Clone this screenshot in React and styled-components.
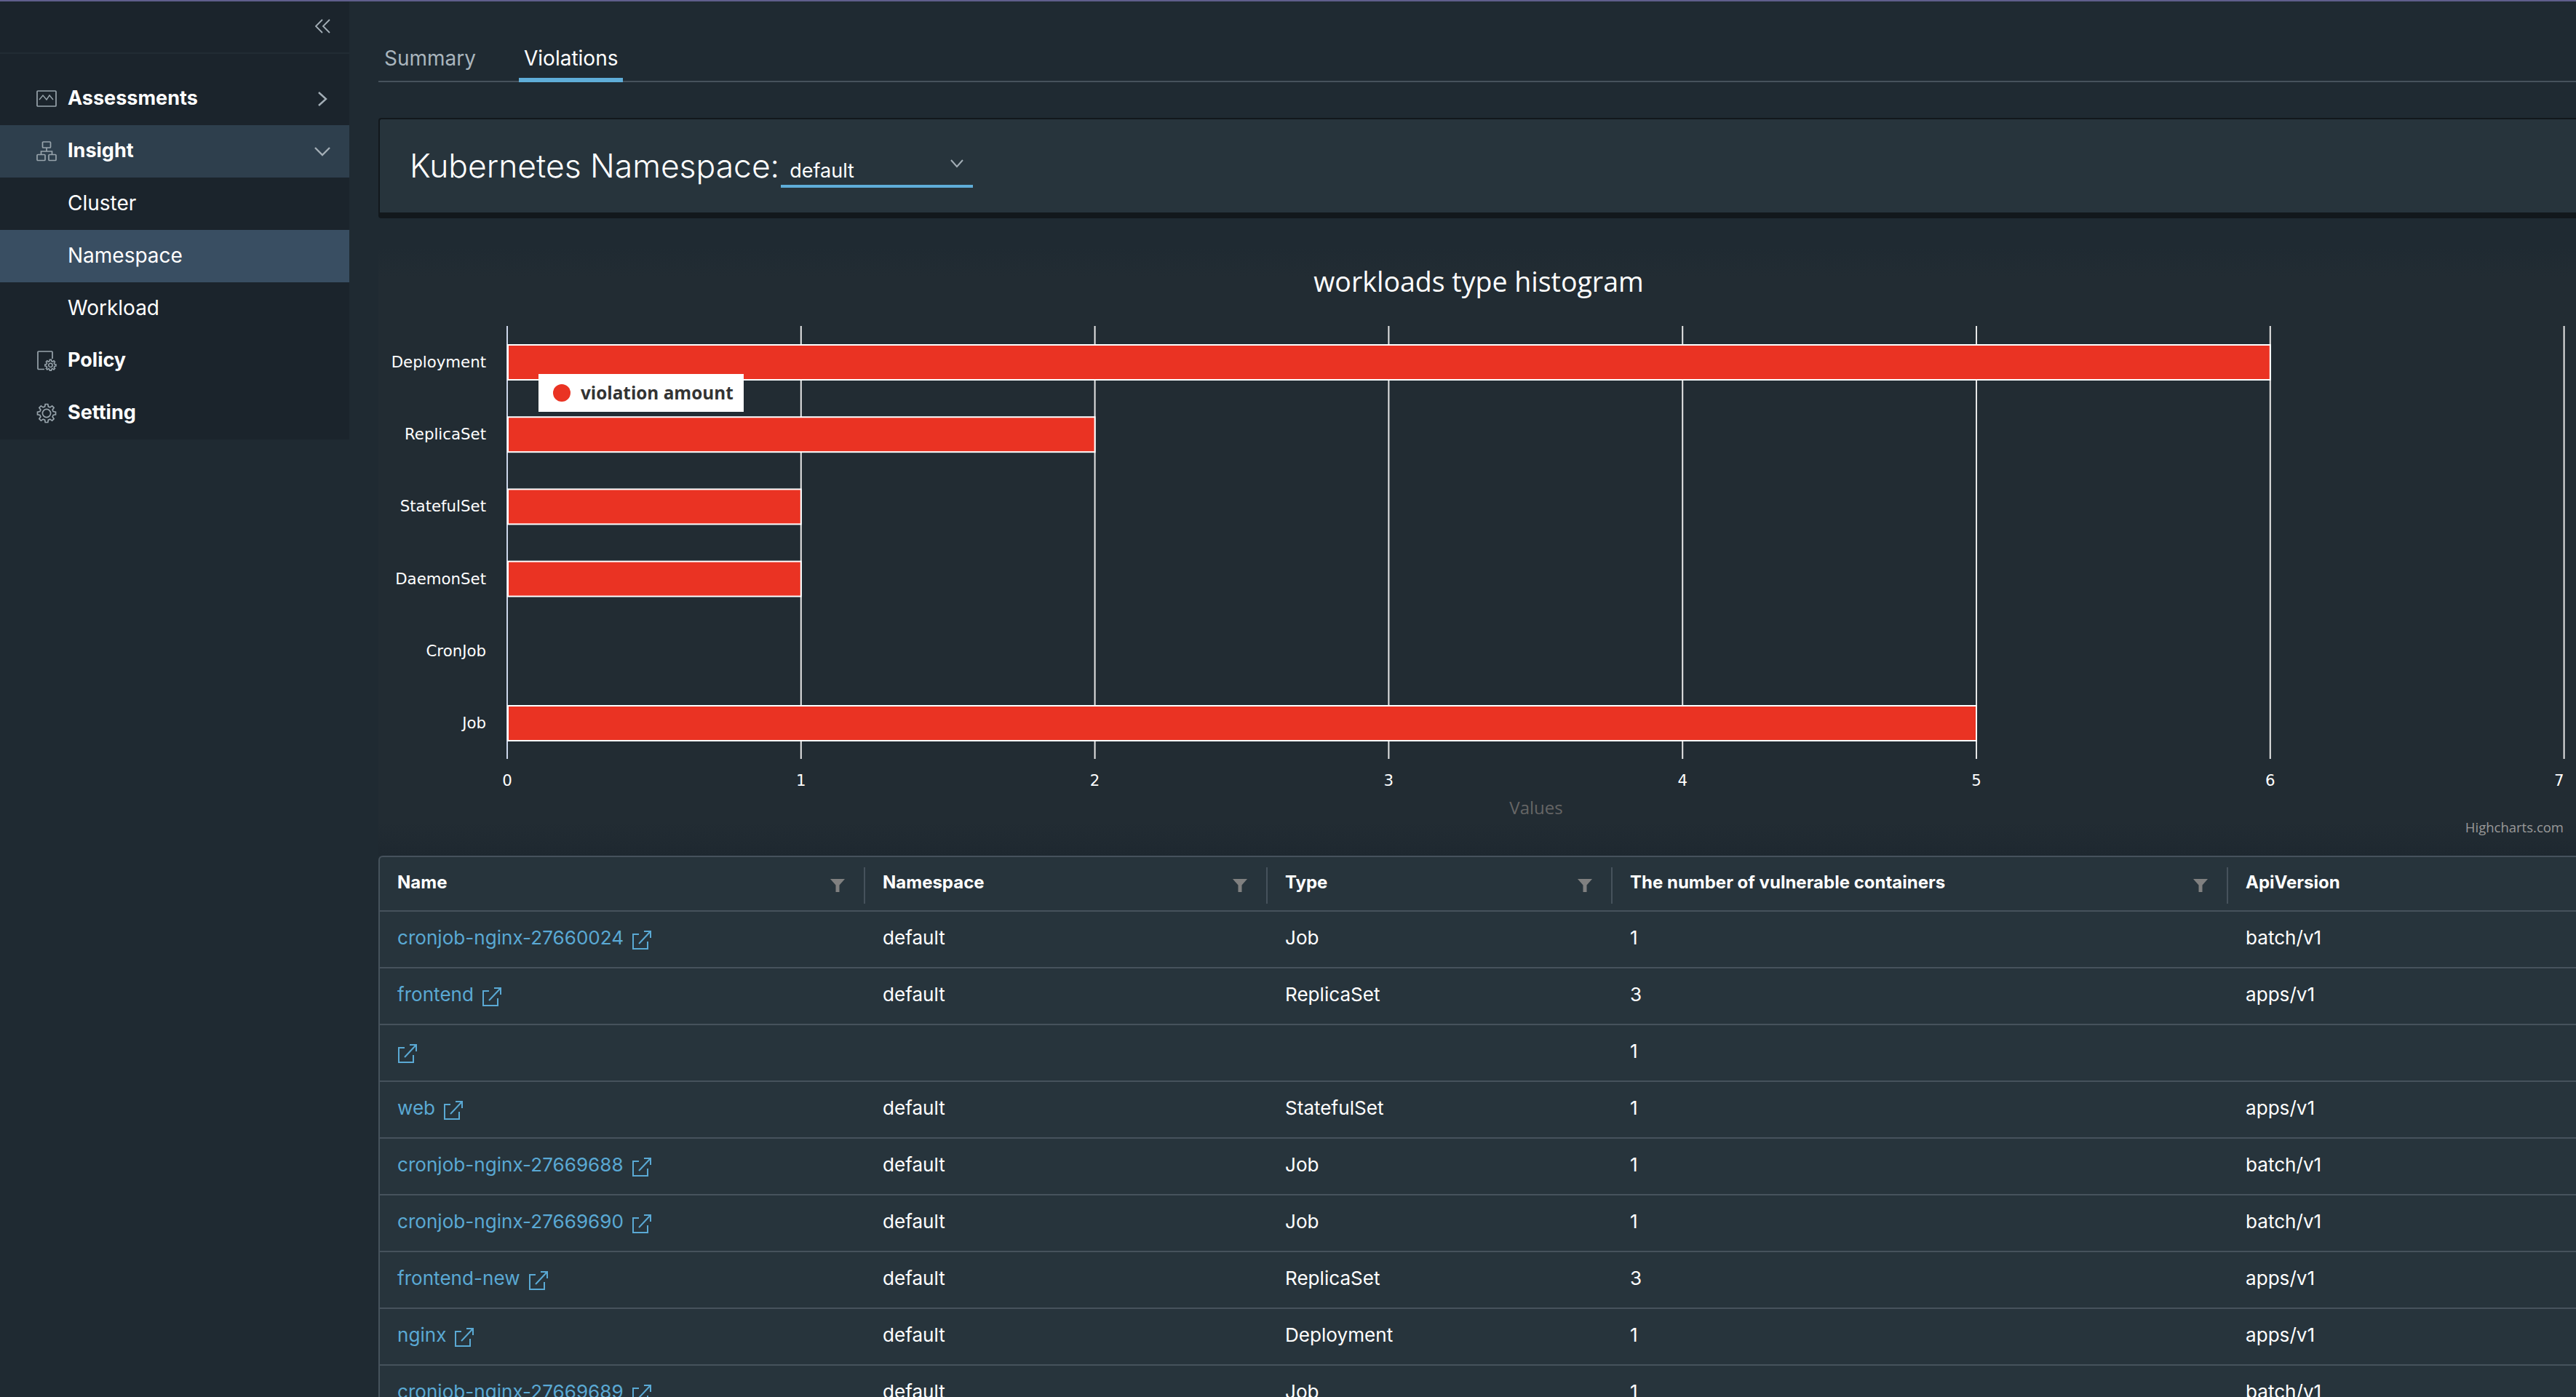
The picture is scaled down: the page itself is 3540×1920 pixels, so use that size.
import React from 'react';
import styled, { createGlobalStyle } from 'styled-components';

const GlobalStyle = createGlobalStyle`
  html, body {
    margin: 0;
    padding: 0;
    background: #1f2a32;
    overflow: hidden;
  }
  * {
    box-sizing: border-box;
  }
`;

const Page = styled.div`
  width: 3540px;
  height: 1920px;
  overflow: hidden;
  display: flex;
  flex-direction: column;
  background: #1f2a32;
  color: #fff;
  font-family: Inter, "Liberation Sans", sans-serif;
`;

const TopLine = styled.div`
  height: 2px;
  flex: none;
  background: #5f5e8c;
`;

const Body = styled.div`
  flex: 1;
  display: flex;
  min-height: 0;
`;

const Sidebar = styled.aside`
  width: 480px;
  flex: none;
  align-self: flex-start;
  background: #1b242c;
`;

const CollapseRow = styled.div`
  height: 72px;
  display: flex;
  align-items: center;
  justify-content: flex-end;
  padding: 0 25px 0 0;
  border-bottom: 2px solid #222c34;
  margin-bottom: 26px;
`;

const NavItem = styled.div`
  height: 72px;
  display: flex;
  align-items: center;
  padding: 0 26px 0 50px;
  background: ${({ $bg }) => $bg || 'transparent'};
`;

const NavIcon = styled.svg`
  width: 28px;
  height: 28px;
  flex: none;
  margin-right: 15px;
  fill: none;
  stroke: #98a4ac;
  stroke-width: 1.7;
`;

const NavLabel = styled.span`
  flex: 1;
  padding-bottom: 3px;
  font-size: ${({ $sub }) => ($sub ? '28px' : '27px')};
  font-weight: ${({ $sub }) => ($sub ? 400 : 700)};
  margin-left: ${({ $sub }) => ($sub ? '43px' : '0')};
  color: #fff;
`;

const Chevron = styled.svg`
  width: 22px;
  height: 22px;
  flex: none;
  fill: none;
  stroke: #a3aeb6;
  stroke-width: 2.4;
`;

const Main = styled.main`
  flex: 1;
  min-width: 0;
  padding-left: 40px;
`;

const Tabs = styled.div`
  height: 111px;
  display: flex;
  align-items: flex-end;
  padding-left: 1px;
  gap: 52px;
  border-bottom: 2px solid #46525c;
`;

const Tab = styled.div`
  height: 60px;
  margin-bottom: -2px;
  padding: 0 7px;
  display: flex;
  align-items: center;
  font-size: 28px;
  color: ${({ $active }) => ($active ? '#fff' : '#a9b5bd')};
  border-bottom: 6px solid ${({ $active }) => ($active ? '#5fadd8' : 'transparent')};
`;

const FilterPanel = styled.section`
  margin-top: 49px;
  height: 138px;
  display: flex;
  align-items: center;
  padding-left: 41px;
  background: #27343c;
  border-top: 2px solid #12181c;
  border-left: 2px solid #12181c;
  border-bottom: 8px solid #12181c;
  border-radius: 4px 0 0 4px;
`;

const PanelTitle = styled.h2`
  margin: 0;
  font-size: 44.4px;
  font-weight: 300;
  color: #fff;
  white-space: nowrap;
`;

const NamespaceSelect = styled.div`
  position: relative;
  margin: 18px 0 0 2px;
  width: 264px;
  height: 42px;
  padding-left: 12px;
  font-size: 27px;
  line-height: 38px;
  color: #fff;
  border-bottom: 4px solid #5fadd8;
`;

const SelectArrow = styled.svg`
  position: absolute;
  right: 12px;
  top: 2px;
  width: 20px;
  height: 14px;
  fill: none;
  stroke: #a3aeb6;
  stroke-width: 2;
`;

const ChartBox = styled.section`
  margin-top: 40px;
  height: 836px;
  background: linear-gradient(#1f2a32 0, #222c33 40px, #222c33 790px, #1e2830 836px);
`;

const ChartSvg = styled.svg`
  display: block;
  width: 3020px;
  height: 836px;
`;

const Table = styled.div`
  background: #27343c;
  border-top: 2px solid #46525c;
  border-left: 2px solid #46525c;
  border-radius: 6px 0 0 0;
`;

const columns = '667px 553px 474px 846px 1fr';

const HeadRow = styled.div`
  display: grid;
  grid-template-columns: ${columns};
  height: 75px;
  border-bottom: 2px solid #46525c;
`;

const HeadCell = styled.div`
  position: relative;
  display: flex;
  align-items: center;
  padding: 0 28px 4px 24px;
  font-size: 24px;
  font-weight: 700;
  color: #fff;
  white-space: nowrap;

  &:not(:last-child)::after {
    content: '';
    position: absolute;
    right: 0;
    top: 14px;
    width: 2px;
    height: 50px;
    background: #46525c;
  }
`;

const HeadLabel = styled.span`
  flex: 1;
`;

const FilterIcon = styled.svg`
  width: 20px;
  height: 18px;
  margin-top: 8px;
  fill: #808080;
`;

const Row = styled.div`
  display: grid;
  grid-template-columns: ${columns};
  height: 78px;
  border-bottom: 2px solid #46525c;
`;

const Cell = styled.div`
  display: flex;
  align-items: center;
  padding: 0 24px 6px;
  font-size: 26.1px;
  font-weight: 400;
  color: #fff;
  white-space: nowrap;
`;

const NameLink = styled.a`
  color: #5aa9d4;
  margin-right: 11px;
  text-decoration: none;
`;

const ExternalIcon = styled.svg`
  width: 28px;
  height: 28px;
  flex: none;
  margin-top: 8px;
  fill: none;
  stroke: #5aa9d4;
  stroke-width: 2;
`;

const External = () => (
  <ExternalIcon viewBox="0 0 28 28">
    <path d="M10 6H2v20h20v-10" />
    <path d="M10 19L26 2M17 2h9v9" />
  </ExternalIcon>
);

const Filter = () => (
  <FilterIcon viewBox="0 0 20 18">
    <path d="M0 0h20l-7.5 8.5V18h-5V8.5z" />
  </FilterIcon>
);

const cogPath =
  'M12.2 1.5h3.6l.6 3.4 2.4 1 2.8-2 2.5 2.5-2 2.8 1 2.4 3.4.6v3.6l-3.4.6-1 2.4 2 2.8-2.5 2.5-2.8-2-2.4 1-.6 3.4h-3.6l-.6-3.4-2.4-1-2.8 2-2.5-2.5 2-2.8-1-2.4-3.4-.6v-3.6l3.4-.6 1-2.4-2-2.8 2.5-2.5 2.8 2 2.4-1z';

const icons = {
  assessments: (
    <>
      <rect x="1" y="3" width="26" height="21" rx="1" />
      <path d="M4 16l5-6 5 6 4-6 5 6" strokeWidth="1.4" transform="translate(0 -1)" />
    </>
  ),
  insight: (
    <>
      <rect x="8.5" y="1" width="11" height="8" rx="1" />
      <rect x="1" y="18.5" width="11" height="8" rx="1" />
      <rect x="17" y="18.5" width="10" height="8" rx="1" />
      <path d="M14 9v5M6.5 18.5V14h15v4.5" />
    </>
  ),
  policy: (
    <>
      <path d="M11 25.5H3a1 1 0 0 1-1-1V2a1 1 0 0 1 1-1h18a1 1 0 0 1 1 1v9" />
      <g transform="translate(11 11.5) scale(.6)">
        <path d={cogPath} strokeWidth="2.6" />
        <circle cx="14" cy="14" r="4.4" strokeWidth="2.6" />
      </g>
    </>
  ),
  setting: (
    <>
      <path d={cogPath} />
      <circle cx="14" cy="14" r="5.6" />
    </>
  ),
};

const navItems = [
  { label: 'Assessments', icon: 'assessments', arrow: 'right' },
  { label: 'Insight', icon: 'insight', arrow: 'down', bg: '#2e3f4d' },
  { label: 'Cluster', sub: true },
  { label: 'Namespace', sub: true, bg: '#394e62' },
  { label: 'Workload', sub: true },
  { label: 'Policy', icon: 'policy' },
  { label: 'Setting', icon: 'setting' },
];

const chartData = [
  { name: 'Deployment', value: 6 },
  { name: 'ReplicaSet', value: 2 },
  { name: 'StatefulSet', value: 1 },
  { name: 'DaemonSet', value: 1 },
  { name: 'CronJob', value: 0 },
  { name: 'Job', value: 5 },
];

// chart coordinates are relative to the box at (520, 340)
const plotLeft = 177;
const plotTop = 108;
const plotBottom = 703;
const unit = 403.8;
const rowStep = 99.2;
const firstBar = 134;
const barHeight = 48;

const Histogram = () => (
  <ChartSvg viewBox="0 0 3020 836">
    <text x="1512" y="61" fill="#fff" fontFamily="'Open Sans', sans-serif" fontSize="37.5" textAnchor="middle">
      workloads type histogram
    </text>
    {[1, 2, 3, 4, 5, 6, 7].map((n) => (
      <line key={n} x1={plotLeft + n * unit} x2={plotLeft + n * unit} y1={plotTop} y2={plotBottom} stroke="#e6e6e6" strokeWidth="2" />
    ))}
    <line x1={plotLeft} x2={plotLeft} y1={plotTop} y2={plotBottom} stroke="#ccd6eb" strokeWidth="2" />
    {chartData.map((d, i) => (
      <g key={d.name}>
        <text
          x={plotLeft - 29}
          y={firstBar + i * rowStep + 31}
          fill="#fff"
          fontFamily="'DejaVu Sans', sans-serif"
          fontSize="21.3"
          textAnchor="end"
        >
          {d.name}
        </text>
        {d.value > 0 && (
          <rect
            x={plotLeft + 1}
            y={firstBar + i * rowStep}
            width={d.value * unit - 1}
            height={barHeight}
            fill="#ea3323"
            stroke="#fff"
            strokeWidth="2"
          />
        )}
      </g>
    ))}
    {[0, 1, 2, 3, 4, 5, 6, 7].map((n) => (
      <text
        key={n}
        x={n === 7 ? plotLeft + n * unit : plotLeft + n * unit}
        y="740"
        fill="#fff"
        fontFamily="'DejaVu Sans', sans-serif"
        fontSize="21.3"
        textAnchor={n === 7 ? 'end' : 'middle'}
      >
        {n}
      </text>
    ))}
    <text x="1591" y="779" fill="#666" fontFamily="'Open Sans', sans-serif" fontSize="24" textAnchor="middle">
      Values
    </text>
    <rect x="220" y="174" width="282" height="52" fill="#fff" />
    <circle cx="252" cy="200" r="12" fill="#ea3323" />
    <text x="278" y="209" fill="#333" fontFamily="'Open Sans', sans-serif" fontWeight="700" fontSize="24.3">
      violation amount
    </text>
    <text x="3003" y="804" fill="#999" fontFamily="'Open Sans', sans-serif" fontSize="18.5" textAnchor="end">
      Highcharts.com
    </text>
  </ChartSvg>
);

const headers = ['Name', 'Namespace', 'Type', 'The number of vulnerable containers', 'ApiVersion'];

const rows = [
  ['cronjob-nginx-27660024', 'default', 'Job', 1, 'batch/v1'],
  ['frontend', 'default', 'ReplicaSet', 3, 'apps/v1'],
  ['', '', '', 1, ''],
  ['web', 'default', 'StatefulSet', 1, 'apps/v1'],
  ['cronjob-nginx-27669688', 'default', 'Job', 1, 'batch/v1'],
  ['cronjob-nginx-27669690', 'default', 'Job', 1, 'batch/v1'],
  ['frontend-new', 'default', 'ReplicaSet', 3, 'apps/v1'],
  ['nginx', 'default', 'Deployment', 1, 'apps/v1'],
  ['cronjob-nginx-27669689', 'default', 'Job', 1, 'batch/v1'],
];

const App = () => (
  <Page>
    <GlobalStyle />
    <TopLine />
    <Body>
      <Sidebar>
        <CollapseRow>
          <Chevron viewBox="0 0 22 22">
            <path d="M10 1L1 10l9 9M20 1l-9 9 9 9" strokeWidth="1.8" />
          </Chevron>
        </CollapseRow>
        {navItems.map((item) => (
          <NavItem key={item.label} $bg={item.bg}>
            {item.icon && <NavIcon viewBox="0 0 28 28">{icons[item.icon]}</NavIcon>}
            <NavLabel $sub={item.sub}>{item.label}</NavLabel>
            {item.arrow === 'right' && (
              <Chevron viewBox="0 0 22 22">
                <path d="M6 2l10 9-10 9" />
              </Chevron>
            )}
            {item.arrow === 'down' && (
              <Chevron viewBox="0 0 22 22">
                <path d="M1 6l10 10L21 6" />
              </Chevron>
            )}
          </NavItem>
        ))}
      </Sidebar>
      <Main>
        <Tabs>
          <Tab>Summary</Tab>
          <Tab $active>Violations</Tab>
        </Tabs>
        <FilterPanel>
          <PanelTitle>Kubernetes Namespace:</PanelTitle>
          <NamespaceSelect>
            default
            <SelectArrow viewBox="0 0 20 14">
              <path d="M2 2l8 9 8-9" />
            </SelectArrow>
          </NamespaceSelect>
        </FilterPanel>
        <ChartBox>
          <Histogram />
        </ChartBox>
        <Table>
          <HeadRow>
            {headers.map((h, i) => (
              <HeadCell key={h}>
                <HeadLabel>{h}</HeadLabel>
                {i < headers.length - 1 && <Filter />}
              </HeadCell>
            ))}
          </HeadRow>
          {rows.map((r, i) => (
            <Row key={i}>
              <Cell>
                {r[0] && <NameLink>{r[0]}</NameLink>}
                <External />
              </Cell>
              <Cell>{r[1]}</Cell>
              <Cell>{r[2]}</Cell>
              <Cell>{r[3]}</Cell>
              <Cell>{r[4]}</Cell>
            </Row>
          ))}
        </Table>
      </Main>
    </Body>
  </Page>
);

export default App;
